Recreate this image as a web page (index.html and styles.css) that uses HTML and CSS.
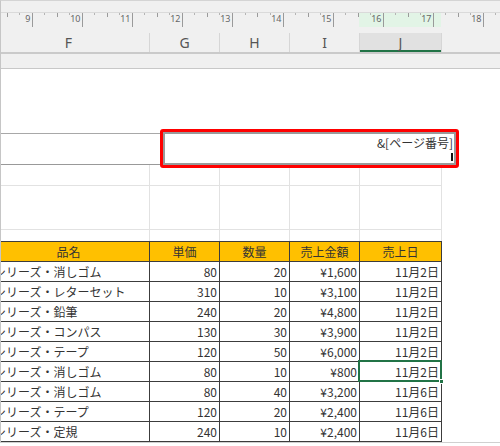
FILE: index.html
```html
<!DOCTYPE html>
<html lang="ja">
<head>
  <meta charset="UTF-8" />
  <title>ページレイアウト - ヘッダー</title>
  <link rel="stylesheet" href="styles.css">
</head>
<body>
  <div class="frame">
    <div class="topbar"></div>

    <!-- ruler -->
    <div class="ruler">
      <svg width="499" height="20" viewBox="0 0 499 20">
        <rect class="hl" x="358" y="0" width="82" height="14" />
        <g class="ticks">
          <line x1="31.5" y1="0" x2="31.5" y2="14" /><line x1="81.5" y1="0" x2="81.5" y2="14" />
          <line x1="131.5" y1="0" x2="131.5" y2="14" /><line x1="181.5" y1="0" x2="181.5" y2="14" />
          <line x1="231.5" y1="0" x2="231.5" y2="14" /><line x1="282.5" y1="0" x2="282.5" y2="14" />
          <line x1="332.5" y1="0" x2="332.5" y2="14" /><line x1="382.5" y1="0" x2="382.5" y2="14" />
          <line x1="432.5" y1="0" x2="432.5" y2="14" /><line x1="482.5" y1="0" x2="482.5" y2="14" />
        </g>
        <g class="ticks">
          <line x1="6.5" y1="0" x2="6.5" y2="4" /><line x1="56.5" y1="0" x2="56.5" y2="4" />
          <line x1="106.5" y1="0" x2="106.5" y2="4" /><line x1="156.5" y1="0" x2="156.5" y2="4" />
          <line x1="206.5" y1="0" x2="206.5" y2="4" /><line x1="256.5" y1="0" x2="256.5" y2="4" />
          <line x1="307.5" y1="0" x2="307.5" y2="4" /><line x1="357.5" y1="0" x2="357.5" y2="4" />
          <line x1="407.5" y1="0" x2="407.5" y2="4" /><line x1="457.5" y1="0" x2="457.5" y2="4" />
        </g>
        <g class="dots">
          <line x1="18.5" y1="0" x2="18.5" y2="2" /><line x1="43.5" y1="0" x2="43.5" y2="2" />
          <line x1="68.5" y1="0" x2="68.5" y2="2" /><line x1="93.5" y1="0" x2="93.5" y2="2" />
          <line x1="118.5" y1="0" x2="118.5" y2="2" /><line x1="143.5" y1="0" x2="143.5" y2="2" />
          <line x1="168.5" y1="0" x2="168.5" y2="2" /><line x1="193.5" y1="0" x2="193.5" y2="2" />
          <line x1="218.5" y1="0" x2="218.5" y2="2" /><line x1="244.5" y1="0" x2="244.5" y2="2" />
          <line x1="269.5" y1="0" x2="269.5" y2="2" /><line x1="294.5" y1="0" x2="294.5" y2="2" />
          <line x1="319.5" y1="0" x2="319.5" y2="2" /><line x1="344.5" y1="0" x2="344.5" y2="2" />
          <line x1="369.5" y1="0" x2="369.5" y2="2" /><line x1="394.5" y1="0" x2="394.5" y2="2" />
          <line x1="419.5" y1="0" x2="419.5" y2="2" /><line x1="444.5" y1="0" x2="444.5" y2="2" />
          <line x1="469.5" y1="0" x2="469.5" y2="2" /><line x1="494.5" y1="0" x2="494.5" y2="2" />
        </g>
        <g class="nums">
          <text x="29.5" y="8.5">9</text><text x="79.5" y="8.5">10</text>
          <text x="129.5" y="8.5">11</text><text x="179.5" y="8.5">12</text>
          <text x="229.5" y="8.5">13</text><text x="280.5" y="8.5">14</text>
          <text x="330.5" y="8.5">15</text><text x="380.5" y="8.5">16</text>
          <text x="430.5" y="8.5">17</text><text x="480.5" y="8.5">18</text>
        </g>
      </svg>
    </div>

    <!-- column letters -->
    <div class="colbar">
      <div class="cols">
        <div class="ch">F</div>
        <div class="ch">G</div>
        <div class="ch">H</div>
        <div class="ch">I</div>
        <div class="ch sel">J</div>
      </div>
    </div>
    <div class="band"></div>

    <div class="page">
      <div class="hdr">
        <div class="hdr-left"></div>
        <div class="hdr-box">
          <div class="hdr-field">&amp;[ページ番号]<span class="caret"></span></div>
        </div>
      </div>

      <div class="blank">
        <div class="row r1"><div></div><div></div><div></div><div></div><div></div></div>
        <div class="row r2"><div></div><div></div><div></div><div></div><div></div></div>
        <div class="row r3"><div></div><div></div><div></div><div></div><div></div></div>
      </div>

      <div class="data">
        <div class="row head">
          <div>品名</div><div>単価</div><div>数量</div><div>売上金額</div><div>売上日</div>
        </div>
        <div class="row"><div class="name">シリーズ・消しゴム</div><div>80</div><div>20</div><div>¥1,600</div><div>11月2日</div></div>
        <div class="row"><div class="name">シリーズ・レターセット</div><div>310</div><div>10</div><div>¥3,100</div><div>11月2日</div></div>
        <div class="row"><div class="name">シリーズ・鉛筆</div><div>240</div><div>20</div><div>¥4,800</div><div>11月2日</div></div>
        <div class="row"><div class="name">シリーズ・コンパス</div><div>130</div><div>30</div><div>¥3,900</div><div>11月2日</div></div>
        <div class="row"><div class="name">シリーズ・テープ</div><div>120</div><div>50</div><div>¥6,000</div><div>11月2日</div></div>
        <div class="row"><div class="name">シリーズ・消しゴム</div><div>80</div><div>10</div><div>¥800</div><div class="active">11月2日</div></div>
        <div class="row"><div class="name">シリーズ・消しゴム</div><div>80</div><div>40</div><div>¥3,200</div><div>11月6日</div></div>
        <div class="row"><div class="name">シリーズ・テープ</div><div>120</div><div>20</div><div>¥2,400</div><div>11月6日</div></div>
        <div class="row"><div class="name">シリーズ・定規</div><div>240</div><div>10</div><div>¥2,400</div><div>11月6日</div></div>
        <div class="row"><div class="name">シリーズ・鉛筆</div><div>240</div><div>10</div><div>¥2,400</div><div>11月6日</div></div>
      </div>
    </div>
  </div>
</body>
</html>
```

FILE: styles.css
```css
body {
  margin: 0;
  background: #fff;
  font-family: "Noto Sans CJK JP", "Noto Sans", sans-serif;
}
.frame {
  width: 500px;
  height: 443px;
  box-sizing: border-box;
  border-left: 1px solid #c6c6c6;
  border-top: 1px solid #d4d4d4;
  border-bottom: 1px solid #d0d0d0;
  overflow: hidden;
}
.topbar {
  height: 11px;
  background: #f0f0f0;
}
.ruler {
  height: 20px;
  border-top: 1px solid #dadada;
  background: #f0f0f0;
}
.ruler svg { display: block; }
.ruler .hl { fill: #e2f4e6; }
.ruler .ticks line { stroke: #9a9a9a; stroke-width: 1; }
.ruler .dots line { stroke: #b4b4b4; stroke-width: 1; }
.ruler .nums text {
  font-family: "Noto Sans", sans-serif;
  font-size: 9px;
  fill: #666;
  text-anchor: end;
}

.colbar {
  height: 19px;
  background: #f0f0f0;
  overflow: hidden;
}
.cols, .row {
  display: grid;
  grid-template-columns: 162px 70px 70px 70px 82px;
  margin-left: -13px;
  width: 454px;
}
.ch {
  border-right: 1px solid #d6d6d6;
  text-align: center;
  font: 14px/19px "Noto Sans", sans-serif;
  color: #555;
}
.ch.sel {
  background: #e1e1e1;
  box-shadow: inset 0 -2px #217346;
}
.band {
  height: 14px;
  border-top: 2px solid #cacaca;
  border-bottom: 1px solid #c8c8c8;
  background: #f0f0f0;
}

.page {
  background: #fff;
  overflow: hidden;
  height: 400px;
}

/* page header editing area */
.hdr {
  display: flex;
  margin-top: 60px;
  height: 36px;
}
.hdr-left {
  flex: 0 0 159px;
  height: 32px;
  margin-top: 4px;
  box-sizing: border-box;
  border-top: 1px solid #a8a8a8;
  border-bottom: 1px solid #999;
}
.hdr-box {
  position: relative;
  z-index: 1;
  flex: 0 0 299px;
  height: 39px;
  box-sizing: border-box;
  border: 3px solid #f00;
  border-radius: 3px;
  background: #fff;
}
.hdr-field {
  position: relative;
  height: 100%;
  box-sizing: border-box;
  border: 2px solid #9a9a9a;
  padding: 1px 1px 0;
  text-align: right;
  font-size: 12px;
  line-height: 16px;
  color: #333;
}
.caret {
  position: absolute;
  right: 1px;
  bottom: 2px;
  width: 2px;
  height: 8px;
  background: #111;
}

/* empty sheet rows */
.row > div {
  box-sizing: border-box;
  border-right: 1px solid #e2e2e2;
  border-bottom: 1px solid #e2e2e2;
}
.blank .r1 > div { height: 21px; }
.blank .r2 > div { height: 44px; }
.blank .r3 > div { height: 11px; border-bottom: none; }

/* sales table */
.data .row > div {
  height: 20px;
  line-height: 19px;
  font-size: 12px;
  color: #333;
  padding: 0 2px;
  text-align: right;
  white-space: nowrap;
  overflow: hidden;
  border-color: #3c3c3c;
}
.data .head {
  border-top: 1px solid #3c3c3c;
}
.data .head > div {
  height: 20px;
  background: #ffc000;
  text-align: center;
  padding: 0;
}
.data .row > .name {
  text-align: left;
  padding-left: 6px;
}
.data .row > .active {
  position: relative;
  overflow: visible;
}
.active::after {
  content: "";
  position: absolute;
  top: -2px;
  left: -2px;
  right: -1px;
  bottom: -1px;
  border: 2px solid #217346;
}
.active::before {
  content: "";
  position: absolute;
  z-index: 1;
  right: -3px;
  bottom: -3px;
  width: 5px;
  height: 5px;
  background: #217346;
  border: 1px solid #fff;
  box-sizing: border-box;
}
```
